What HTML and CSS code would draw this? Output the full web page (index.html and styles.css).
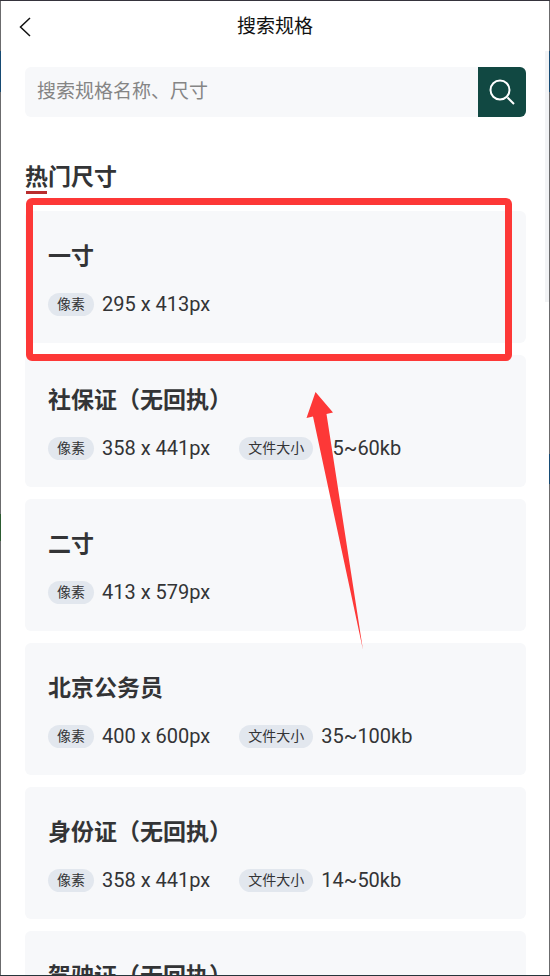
FILE: index.html
```html
<!DOCTYPE html>
<html lang="zh-CN">
<head>
<meta charset="utf-8">
<meta name="viewport" content="width=device-width, initial-scale=1">
<title>搜索规格</title>
<link rel="stylesheet" href="styles.css">
</head>
<body>
<div class="app">
  <header class="bar">
    <button class="back" type="button" aria-label="返回">
      <svg width="12" height="20" viewBox="0 0 12 20" fill="none" stroke="#111" stroke-width="1.5"><path d="M11 1 1.500 10 11 19"/></svg>
    </button>
    <h1 class="bar-title">搜索规格</h1>
  </header>
  <main class="content">
    <form class="search">
      <input class="search-input" type="text" placeholder="搜索规格名称、尺寸" aria-label="搜索规格名称、尺寸">
      <button class="search-button" type="button" aria-label="搜索">
        <svg width="28" height="28" viewBox="0 0 28 28" fill="none" stroke="#fff" stroke-width="2"><circle cx="12" cy="12" r="9.500"/><path d="m19.500 19.500 6.500 6.500"/></svg>
      </button>
    </form>
    <h2 class="section-title">热门尺寸</h2>
    <div class="sizes">
      <ul class="list">
        <li class="card">
          <h3 class="name">一寸</h3>
          <div class="specs"><div class="spec"><span class="tag">像素</span><span class="value">295 x 413px</span></div></div>
        </li>
        <li class="card">
          <h3 class="name">社保证（无回执）</h3>
          <div class="specs"><div class="spec"><span class="tag">像素</span><span class="value">358 x 441px</span></div><div class="spec"><span class="tag">文件大小</span><span class="value">15~60kb</span></div></div>
        </li>
        <li class="card">
          <h3 class="name">二寸</h3>
          <div class="specs"><div class="spec"><span class="tag">像素</span><span class="value">413 x 579px</span></div></div>
        </li>
        <li class="card">
          <h3 class="name">北京公务员</h3>
          <div class="specs"><div class="spec"><span class="tag">像素</span><span class="value">400 x 600px</span></div><div class="spec"><span class="tag">文件大小</span><span class="value">35~100kb</span></div></div>
        </li>
        <li class="card">
          <h3 class="name">身份证（无回执）</h3>
          <div class="specs"><div class="spec"><span class="tag">像素</span><span class="value">358 x 441px</span></div><div class="spec"><span class="tag">文件大小</span><span class="value">14~50kb</span></div></div>
        </li>
        <li class="card">
          <h3 class="name">驾驶证（无回执）</h3>
        </li>
      </ul>
      <div class="highlight"></div>
      <svg class="arrow" width="60" height="260" viewBox="0 0 60 260" fill="#fd3837" aria-hidden="true"><path d="M10.500 1 28 21.500 21.500 23 58 259 8 25.500 1.500 27z"/></svg>
    </div>
  </main>
  <div class="scroll-thumb"></div>
</div>
</body>
</html>
```
FILE: styles.css
```css
* {
  box-sizing: border-box;
}

body {
  margin: 0;
  padding: 1px;
  height: 100vh;
  overflow: hidden;
  font-family: Roboto, "Noto Sans CJK SC", sans-serif;
  color: #333436;
  background:
    linear-gradient(#35333c, #35333c) top / 100% 1px no-repeat,
    linear-gradient(#27353b, #27353b) bottom / 100% 1px no-repeat,
    linear-gradient(#6b6b6d 51px, #164a73 51px 92px, #6b6b6d 92px 514px, #2c5b31 514px 541px, #6b6b6d 541px) left / 1px 100% no-repeat,
    linear-gradient(#6b6b6d 51px, #164a73 51px 92px, #6b6b6d 92px 454px, #164a73 454px 484px, #6b6b6d 484px) right / 1px 100% no-repeat;
}

h1, h2, h3, ul {
  margin: 0;
  padding: 0;
}

button {
  border: 0;
  padding: 0;
  background: none;
}

svg {
  display: block;
}

.app {
  position: relative;
  height: 100%;
  overflow: hidden;
  background: #fff;
}

.bar {
  display: grid;
  grid-template-columns: 48px 1fr 48px;
  align-items: center;
  height: 52px;
}

.back {
  justify-self: center;
}

.bar-title {
  font-size: 19px;
  font-weight: 400;
  line-height: 28px;
  text-align: center;
  color: #111;
}

.content {
  padding: 14px 23px 0 24px;
}

.search {
  display: flex;
  height: 50px;
  border-radius: 6px;
  overflow: hidden;
  background: #f7f8fa;
}

.search-input {
  flex: 1;
  min-width: 0;
  border: 0;
  padding: 0 12px 2px;
  font: inherit;
  font-size: 19px;
  background: none;
  outline: none;
}

.search-input::placeholder {
  color: #858585;
  opacity: 1;
}

.search-button {
  display: grid;
  place-items: center;
  width: 48px;
  background: #114842;
}

.section-title {
  position: relative;
  margin-top: 46px;
  font-size: 23px;
  font-weight: 700;
  line-height: 30px;
}

.section-title::after {
  content: "";
  position: absolute;
  left: 1px;
  bottom: -1px;
  width: 21px;
  height: 3px;
  background: #b92d2e;
}

.sizes {
  position: relative;
  margin-top: 18px;
}

.list {
  display: grid;
  gap: 12px;
  list-style: none;
}

.card {
  min-height: 132px;
  padding: 30px 23px 27px;
  border-radius: 6px;
  background: #f7f8fa;
}

.name {
  font-size: 23px;
  font-weight: 700;
  line-height: 32px;
}

.specs {
  display: flex;
  gap: 29px;
  margin-top: 19px;
}

.spec {
  display: flex;
  align-items: center;
  gap: 8px;
}

.tag {
  padding: 0 9px;
  border-radius: 12px;
  font-size: 14px;
  line-height: 23px;
  background: #e2e7ee;
}

.value {
  font-size: 20px;
  line-height: 24px;
}

.highlight {
  position: absolute;
  top: -13px;
  left: 1px;
  right: 14px;
  height: 163px;
  border: 7px solid #fd3837;
  border-radius: 6px;
}

.arrow {
  position: absolute;
  top: 180px;
  left: 280px;
}

.scroll-thumb {
  position: absolute;
  top: 50px;
  right: 0;
  width: 4px;
  height: 251px;
  background: #f2f3f5;
}
```
